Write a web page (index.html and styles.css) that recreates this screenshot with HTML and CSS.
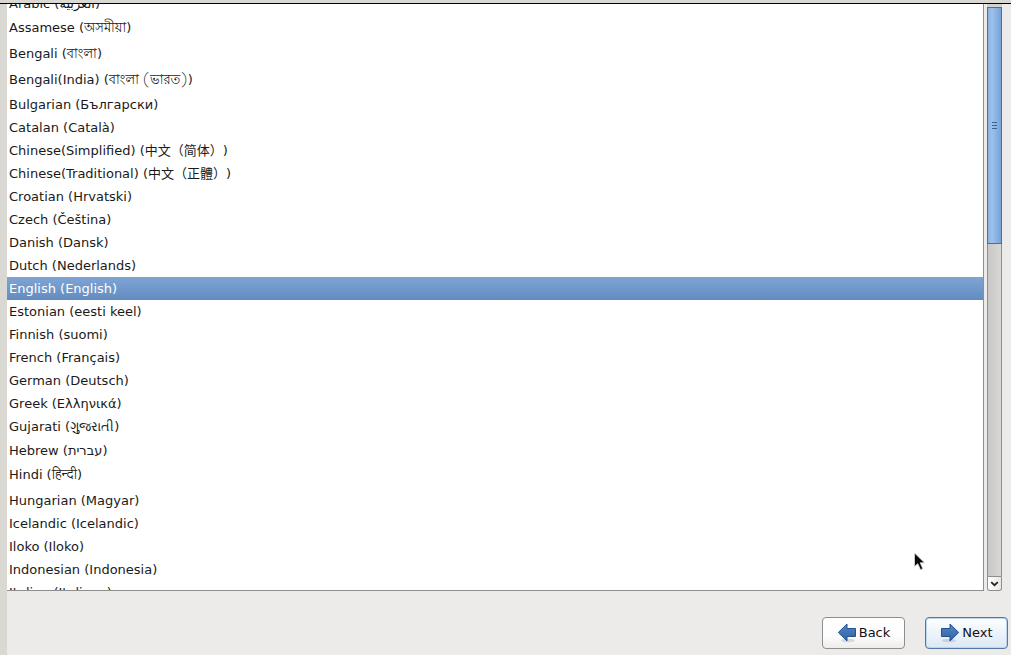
FILE: index.html
```html
<!DOCTYPE html>
<html lang="en">
<head>
<meta charset="utf-8">
<title>Language selection</title>
<link rel="stylesheet" href="styles.css">
</head>
<body>
<main class="window">
  <div class="chooser">
    <div class="viewport">
      <ul class="languages" role="listbox" aria-label="Language" tabindex="0">
        <li role="option">Arabic (العربية)</li>
        <li role="option" class="tall">Assamese (<span class="indic">অসমীয়া</span>)</li>
        <li role="option" class="tall">Bengali (<span class="indic">বাংলা</span>)</li>
        <li role="option" class="tall">Bengali(India) (<span class="indic">বাংলা (ভারত)</span>)</li>
        <li role="option">Bulgarian (Български)</li>
        <li role="option">Catalan (Català)</li>
        <li role="option">Chinese(Simplified) (<span class="cjk" lang="zh-CN">中文（简体）</span>)</li>
        <li role="option">Chinese(Traditional) (<span class="cjk" lang="zh-CN">中文（正體）</span>)</li>
        <li role="option">Croatian (Hrvatski)</li>
        <li role="option">Czech (Čeština)</li>
        <li role="option">Danish (Dansk)</li>
        <li role="option">Dutch (Nederlands)</li>
        <li role="option" class="selected" aria-selected="true">English (English)</li>
        <li role="option">Estonian (eesti keel)</li>
        <li role="option">Finnish (suomi)</li>
        <li role="option">French (Français)</li>
        <li role="option">German (Deutsch)</li>
        <li role="option">Greek (Ελληνικά)</li>
        <li role="option">Gujarati (<span class="indic">ગુજરાતી</span>)</li>
        <li role="option" class="medium">Hebrew (<bdi>עברית</bdi>)</li>
        <li role="option" class="taller">Hindi (<span class="indic">हिन्दी</span>)</li>
        <li role="option">Hungarian (Magyar)</li>
        <li role="option">Icelandic (Icelandic)</li>
        <li role="option">Iloko (Iloko)</li>
        <li role="option">Indonesian (Indonesia)</li>
        <li role="option">Italian (Italiano)</li>
      </ul>
    </div>
    <div class="scrollbar">
      <div class="thumb"><span class="grip"></span></div>
      <div class="track"></div>
      <button class="step" type="button" aria-label="Scroll down">
        <svg width="9" height="6" viewBox="0 0 9 6"><path d="M1.2 1.2 4.5 4.2 7.8 1.2" fill="none" stroke="#222" stroke-width="1.8"/></svg>
      </button>
    </div>
  </div>
  <footer class="actions">
    <button class="action" type="button">
      <svg class="arrow" width="20" height="20" viewBox="0 0 20 20">
        <defs><linearGradient id="blue" x1="0" y1="0" x2="0" y2="1"><stop offset="0" stop-color="#5686c2"/><stop offset="1" stop-color="#2f63a7"/></linearGradient></defs>
        <ellipse cx="11" cy="17.5" rx="7" ry="1.8" fill="#000" opacity=".12"/>
        <path d="M1.3 9.5 10 1v4.500h8.500v8H10V18z" fill="url(#blue)" stroke="#24508d"/>
      </svg>Back</button>
    <button class="action primary" type="button">
      <svg class="arrow" width="20" height="20" viewBox="0 0 20 20">
        <ellipse cx="9" cy="17.5" rx="7" ry="1.8" fill="#000" opacity=".12"/>
        <path d="M18.700 9.500 10 1v4.500H1.500v8H10V18z" fill="url(#blue)" stroke="#24508d"/>
      </svg>Next</button>
  </footer>
</main>
<svg class="pointer" width="14" height="20" viewBox="0 0 14 20"><path d="M1.5 1v13.5L4.8 11.700l2.700 6 2.300-1-2.600-5.900h4.300z" fill="#080808" stroke="#ddd" stroke-width=".8"/></svg>
</body>
</html>
```
FILE: styles.css
```css
* { box-sizing: border-box; }
body {
  margin: 0;
  background: #ecebe9;
  color: #1a1a1a;
  font: 13px/24px "DejaVu Sans", "Noto Sans CJK SC", sans-serif;
}
.window {
  height: 100vh;
  display: flex;
  flex-direction: column;
  border-left: 7px solid #d9d8d3;
}
.window::before {
  content: "";
  flex: none;
  height: 3px;
  margin-left: -7px;
  background: #d9d8d3;
  border-bottom: 1px solid #000;
}
.chooser {
  flex: 1;
  min-height: 0;
  display: flex;
  gap: 3px;
  padding-right: 9px;
}
.viewport {
  flex: 1;
  overflow: hidden;
  background: #fff;
  border-right: 1px solid #8e8e8c;
  border-bottom: 1px solid #8e8e8c;
}
.languages {
  list-style: none;
  margin: -12px 0 0;
  padding: 0;
  outline: none;
}
.languages li {
  height: 23px;
  padding-left: 2px;
  white-space: nowrap;
}
.languages .medium { height: 24px; line-height: 26px; }
.languages .tall { height: 26px; line-height: 26px; }
.languages .taller { height: 27px; line-height: 26px; }
.languages .selected {
  background: linear-gradient(#7fa5d5, #628bc0);
  color: #fff;
}
.indic { font-family: "Lohit Bengali", "Lohit Gujarati", "Lohit Devanagari", "Noto Sans", sans-serif; line-height: 1; }
.cjk { font-family: "Noto Sans CJK SC", sans-serif; line-height: 1; text-spacing-trim: space-all; }
.scrollbar {
  width: 15px;
  display: flex;
  flex-direction: column;
  padding-top: 3px;
  background: #d3d2d0;
}
.thumb {
  flex: 235 1 0;
  display: flex;
  align-items: center;
  justify-content: center;
  border: 1px solid #4a6f9f;
  background: linear-gradient(90deg, #8bb2e2, #9dc1eb 30%, #78a3d8);
}
.grip {
  width: 5px;
  height: 7px;
  background: repeating-linear-gradient(#3e628f 0 1px, transparent 1px 3px);
}
.track {
  flex: 333 1 0;
  border: solid #8e8e8c;
  border-width: 0 1px;
  background: linear-gradient(90deg, #c9c8c6, #d8d7d5);
}
.step {
  height: 15px;
  display: flex;
  align-items: center;
  justify-content: center;
  padding: 0;
  border: 1px solid #8e8e8c;
  border-radius: 0 0 3px 3px;
  background: linear-gradient(90deg, #fff, #e8e7e5);
}
.actions {
  display: flex;
  justify-content: flex-end;
  gap: 20px;
  padding: 26px 3px 6px 0;
}
.action {
  width: 83px;
  height: 32px;
  display: flex;
  align-items: center;
  justify-content: center;
  gap: 2px;
  padding: 0;
  border: 1px solid #8e8e8c;
  border-radius: 4px;
  background: linear-gradient(#fff, #fdfdfd 60%, #eeedeb);
  color: #111;
  font: inherit;
}
.primary {
  border-color: #5478a6;
  background: linear-gradient(#fff, #edf3fa 50%, #dce8f6);
  box-shadow: inset 0 0 0 1px #bfd4ed;
}
.pointer {
  position: absolute;
  left: 913px;
  top: 552px;
}
```
